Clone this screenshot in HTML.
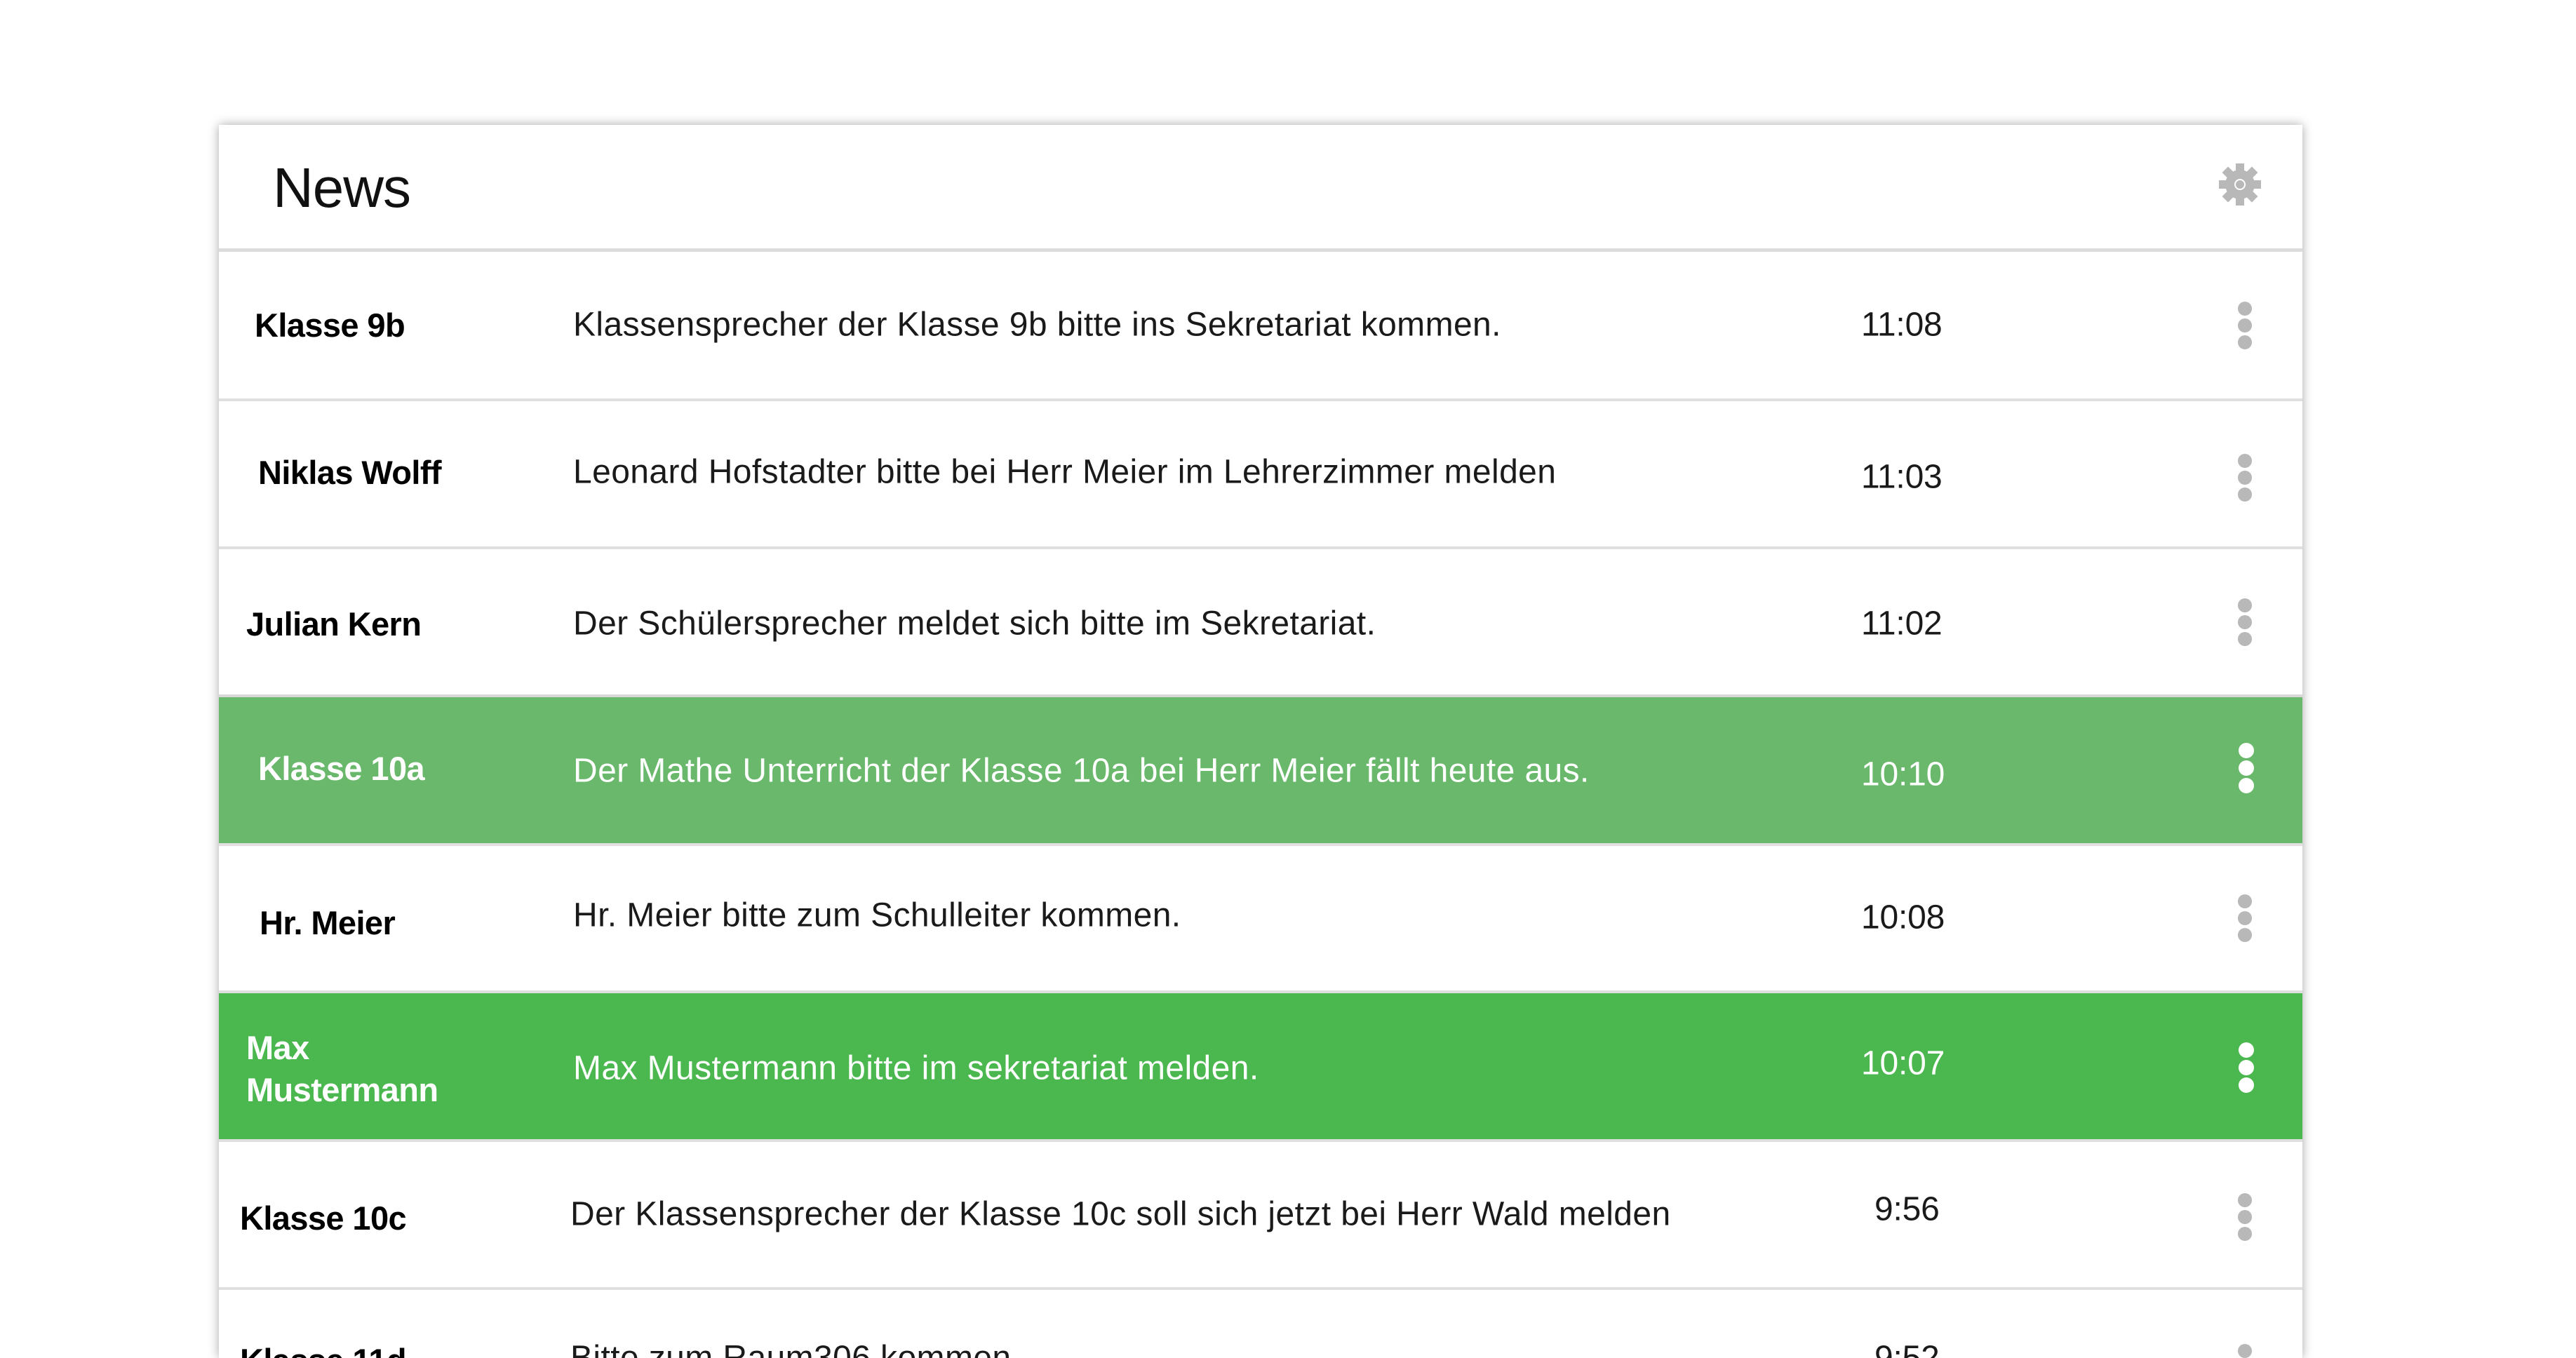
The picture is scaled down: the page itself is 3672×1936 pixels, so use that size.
<!DOCTYPE html>
<html><head><meta charset="utf-8"><style>
html,body{margin:0;padding:0;width:3672px;height:1936px;overflow:hidden}
body{background:#fff;position:relative;font-family:"Liberation Sans",sans-serif}
.card{position:absolute;left:312px;top:178px;width:2970px;height:1758px;background:#fff;box-shadow:0 0 14px rgba(0,0,0,.35)}
.hdiv{position:absolute;left:312px;width:2970px;height:5px;background:#dcdcdc;top:354px}
.div{position:absolute;left:312px;width:2970px;height:4px;background:#e0e0e0}
.row{position:absolute;left:312px;width:2970px}
.t{position:absolute;transform:translateY(-50%);line-height:1.1;white-space:nowrap}
.n{font-weight:bold;font-size:47px;letter-spacing:-0.6px;color:#000}
.m{font-size:48px;letter-spacing:0.4px;color:#1a1a1a}
.tm{font-size:48px;color:#1a1a1a;letter-spacing:-0.2px}
.w{color:#fff}
.dots{position:absolute;width:20px;transform:translate(-50%,-50%)}
.dots i{display:block;width:20px;height:20px;border-radius:50%;background:#b8b8b8;margin:4px 0}
.dots.wh{width:22px}.dots.wh i{width:22px;height:22px;background:#fff;margin:3px 0}
.clip{position:absolute;left:0;top:0;width:3672px;height:1936px;overflow:hidden}
</style></head><body><div class="clip">
<div class="card"></div>
<div class="t" style="left:389px;top:268px;font-size:80px;color:#111;letter-spacing:-1px">News</div>
<svg style="position:absolute;left:3163px;top:233px" width="60" height="60" viewBox="-30 -30 60 60">
<g fill="#b8b8b8">
<circle r="21"/>
<g id="tth"><rect x="-6" y="-30" width="12" height="12"/></g>
<use href="#tth" transform="rotate(45)"/><use href="#tth" transform="rotate(90)"/><use href="#tth" transform="rotate(135)"/>
<use href="#tth" transform="rotate(180)"/><use href="#tth" transform="rotate(225)"/><use href="#tth" transform="rotate(270)"/><use href="#tth" transform="rotate(315)"/>
</g>
<circle r="7" fill="none" stroke="#fff" stroke-width="2"/>
</svg>
<div class="hdiv"></div>

<div class="row" style="top:991px;height:211px;background:#69b86b"></div>
<div class="row" style="top:1413px;height:211px;background:#4ab74f"></div>

<div class="div" style="top:568px"></div>
<div class="div" style="top:779px"></div>
<div class="div" style="top:990px;background:#d8d8d8"></div>
<div class="div" style="top:1202px"></div>
<div class="div" style="top:1412px"></div>
<div class="div" style="top:1624px"></div>
<div class="div" style="top:1835px"></div>

<div class="t n" style="left:363px;top:464px">Klasse 9b</div>
<div class="t m" style="left:817px;top:464px">Klassensprecher der Klasse 9b bitte ins Sekretariat kommen.</div>
<div class="t tm" style="left:2653px;top:464px">11:08</div>
<div class="dots" style="left:3200px;top:464px"><i></i><i></i><i></i></div>

<div class="t n" style="left:368px;top:674px">Niklas Wolff</div>
<div class="t m" style="left:817px;top:674px">Leonard Hofstadter bitte bei Herr Meier im Lehrerzimmer melden</div>
<div class="t tm" style="left:2653px;top:681px">11:03</div>
<div class="dots" style="left:3200px;top:681px"><i></i><i></i><i></i></div>

<div class="t n" style="left:351px;top:890px">Julian Kern</div>
<div class="t m" style="left:817px;top:890px">Der Schülersprecher meldet sich bitte im Sekretariat.</div>
<div class="t tm" style="left:2653px;top:890px">11:02</div>
<div class="dots" style="left:3200px;top:887px"><i></i><i></i><i></i></div>

<div class="t n w" style="left:368px;top:1096px">Klasse 10a</div>
<div class="t m w" style="left:817px;top:1100px">Der Mathe Unterricht der Klasse 10a bei Herr Meier fällt heute aus.</div>
<div class="t tm w" style="left:2653px;top:1105px">10:10</div>
<div class="dots wh" style="left:3202px;top:1095px"><i></i><i></i><i></i></div>

<div class="t n" style="left:370px;top:1316px">Hr. Meier</div>
<div class="t m" style="left:817px;top:1306px">Hr. Meier bitte zum Schulleiter kommen.</div>
<div class="t tm" style="left:2653px;top:1309px">10:08</div>
<div class="dots" style="left:3200px;top:1309px"><i></i><i></i><i></i></div>

<div class="t n w" style="left:351px;top:1494px">Max</div>
<div class="t n w" style="left:351px;top:1554px">Mustermann</div>
<div class="t m w" style="left:817px;top:1524px">Max Mustermann bitte im sekretariat melden.</div>
<div class="t tm w" style="left:2653px;top:1517px">10:07</div>
<div class="dots wh" style="left:3202px;top:1522px"><i></i><i></i><i></i></div>

<div class="t n" style="left:342px;top:1737px">Klasse 10c</div>
<div class="t m" style="left:813px;top:1732px">Der Klassensprecher der Klasse 10c soll sich jetzt bei Herr Wald melden</div>
<div class="t tm" style="left:2672px;top:1725px">9:56</div>
<div class="dots" style="left:3200px;top:1735px"><i></i><i></i><i></i></div>

<div class="t n" style="left:342px;top:1940px">Klasse 11d</div>
<div class="t m" style="left:813px;top:1937px">Bitte zum Raum306 kommen.</div>
<div class="t tm" style="left:2672px;top:1937px">9:52</div>
<div class="dots" style="left:3200px;top:1950px"><i></i><i></i><i></i></div>
</div></body></html>
